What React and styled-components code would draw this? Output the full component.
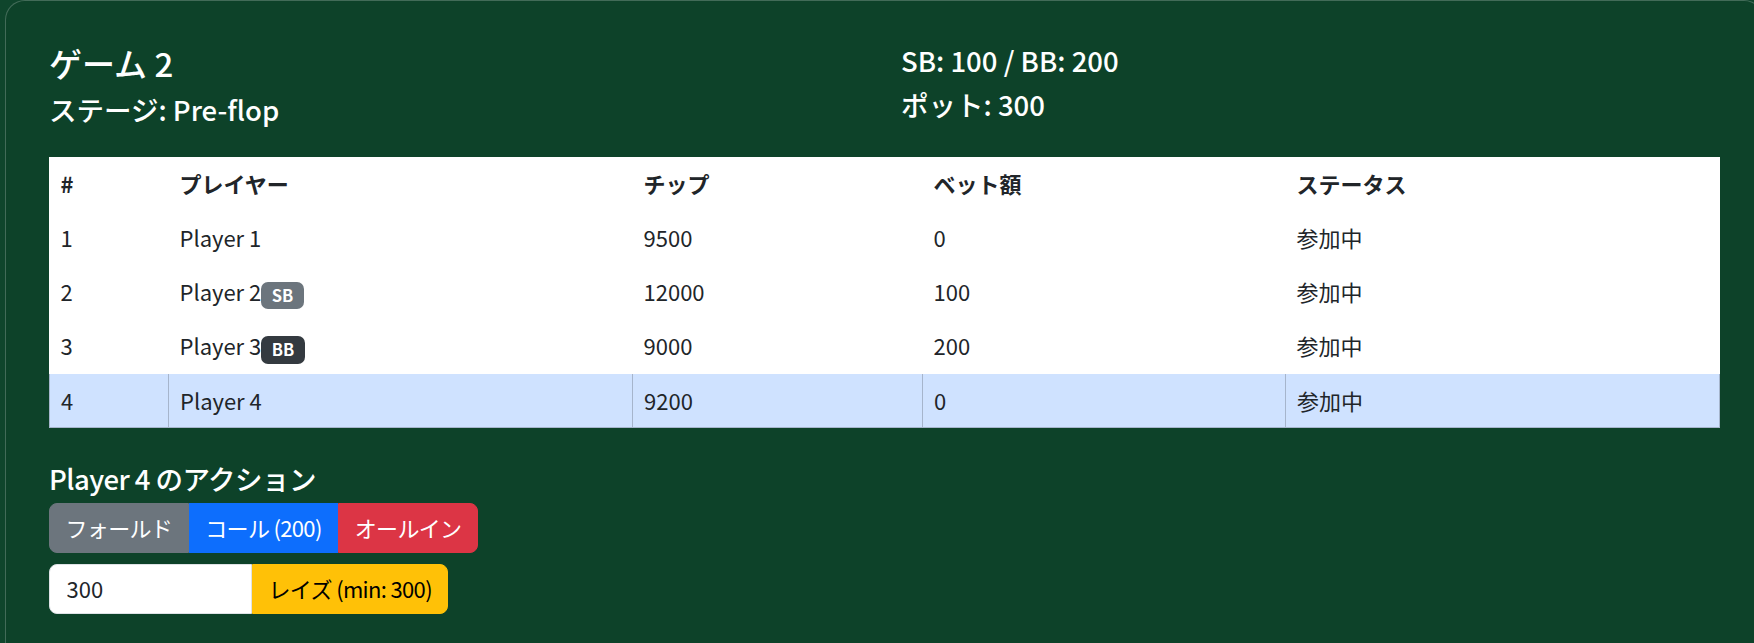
import styled, { createGlobalStyle } from "styled-components";

const GlobalStyle = createGlobalStyle`
  html, body {
    margin: 0;
    padding: 0;
    background: #0f452c;
    overflow: hidden;
  }
  body {
    font-family: "Noto Sans CJK JP", "Noto Sans", sans-serif;
    font-size: 22px;
    line-height: 1.5;
    color: #fff;
  }
  * {
    box-sizing: border-box;
  }
`;

const Page = styled.div`
  padding-left: 5px;
`;

const Card = styled.section`
  width: 1759px;
  background: #0d4229;
  border: 1px solid rgba(255, 255, 255, 0.22);
  border-radius: 20px;
  padding: 43px 43px 60px;
`;

const InfoRow = styled.div`
  display: grid;
  grid-template-columns: 1fr 1fr;
  column-gap: 33px;
  margin-bottom: 31px;
`;

const InfoCol = styled.div`
  display: flex;
  flex-direction: column;
`;

const Title = styled.h2`
  margin: 0 0 9px;
  font-size: 33px;
  font-weight: 500;
  line-height: 1.2;
`;

const SubTitle = styled.h5`
  margin: 0 0 ${(p) => (p.$last ? 0 : 11)}px;
  font-size: 27.5px;
  font-weight: 500;
  line-height: 1.2;
`;

const Table = styled.table`
  width: 1671px;
  table-layout: fixed;
  border-collapse: collapse;
  background: #fff;
  color: #212529;
  margin-bottom: 34px;
`;

const Cell = styled.td`
  padding: 10px 11px;
  line-height: 33px;
  text-align: left;
  vertical-align: middle;
  white-space: nowrap;
  font-weight: ${(p) => (p.as === "th" ? 700 : 400)};
  border-bottom: 1px solid #fff;
`;

const Row = styled.tr`
  ${(p) =>
    p.$active &&
    `
    background: #cfe2ff;
    & > td {
      border-left: 1px solid #a6b5cc;
      border-right: 1px solid #a6b5cc;
      border-bottom: 1px solid #a6b5cc;
    }
  `}
`;

const Badge = styled.span`
  display: inline-block;
  padding: 5px 10.5px 6px;
  font-size: 16.5px;
  font-weight: 700;
  line-height: 1;
  color: #fff;
  border-radius: 7px;
  position: relative;
  top: 1px;
  background: ${(p) => (p.$dark ? "#343a40" : "#6c757d")};
`;

const ActionTitle = styled.h5`
  margin: 0 0 8px;
  font-size: 27.5px;
  font-weight: 500;
  line-height: 1.2;
  letter-spacing: -0.02em;
`;

const ButtonGroup = styled.div`
  display: inline-flex;
  margin-bottom: 11px;
`;

const Button = styled.button`
  font-family: inherit;
  font-size: 22px;
  line-height: 33px;
  padding: 7.5px 15.5px;
  border: 1px solid ${(p) => p.$bg};
  background: ${(p) => p.$bg};
  color: ${(p) => p.$color || "#fff"};
  border-radius: 0;
  cursor: pointer;
  white-space: nowrap;
  letter-spacing: -0.03em;

  &:first-child {
    border-top-left-radius: 8px;
    border-bottom-left-radius: 8px;
  }
  &:last-child {
    border-top-right-radius: 8px;
    border-bottom-right-radius: 8px;
  }
`;

const InputGroup = styled.div`
  display: flex;
  width: fit-content;
`;

const AmountInput = styled.input`
  width: 203px;
  font-family: inherit;
  font-size: 22px;
  line-height: 33px;
  padding: 7.5px 16.5px;
  border: 1px solid #dee2e6;
  border-radius: 8px 0 0 8px;
  color: #212529;
  background: #fff;
  outline: none;
`;

const players = [
  { id: 1, name: "Player 1", chips: 9500, bet: 0, status: "参加中" },
  { id: 2, name: "Player 2", chips: 12000, bet: 100, status: "参加中", badge: "SB" },
  { id: 3, name: "Player 3", chips: 9000, bet: 200, status: "参加中", badge: "BB" },
  { id: 4, name: "Player 4", chips: 9200, bet: 0, status: "参加中", active: true },
];

export default function App() {
  return (
    <Page>
      <GlobalStyle />
      <Card>
        <InfoRow>
          <InfoCol>
            <Title>ゲーム 2</Title>
            <SubTitle $last>ステージ: Pre-flop</SubTitle>
          </InfoCol>
          <InfoCol>
            <SubTitle>SB: 100 / BB: 200</SubTitle>
            <SubTitle $last>ポット: 300</SubTitle>
          </InfoCol>
        </InfoRow>

        <Table>
          <colgroup>
            <col style={{ width: 119 }} />
            <col style={{ width: 464 }} />
            <col style={{ width: 290 }} />
            <col style={{ width: 363 }} />
            <col />
          </colgroup>
          <thead>
            <Row>
              <Cell as="th">#</Cell>
              <Cell as="th">プレイヤー</Cell>
              <Cell as="th">チップ</Cell>
              <Cell as="th">ベット額</Cell>
              <Cell as="th">ステータス</Cell>
            </Row>
          </thead>
          <tbody>
            {players.map((p) => (
              <Row key={p.id} $active={p.active}>
                <Cell>{p.id}</Cell>
                <Cell>
                  {p.name}
                  {p.badge && <Badge $dark={p.badge === "BB"}>{p.badge}</Badge>}
                </Cell>
                <Cell>{p.chips}</Cell>
                <Cell>{p.bet}</Cell>
                <Cell>{p.status}</Cell>
              </Row>
            ))}
          </tbody>
        </Table>

        <ActionTitle>Player 4 のアクション</ActionTitle>
        <ButtonGroup>
          <Button $bg="#6c757d">フォールド</Button>
          <Button $bg="#0d6efd">コール (200)</Button>
          <Button $bg="#dc3545">オールイン</Button>
        </ButtonGroup>
        <InputGroup>
          <AmountInput type="number" defaultValue={300} />
          <Button $bg="#ffc107" $color="#000">
            レイズ (min: 300)
          </Button>
        </InputGroup>
      </Card>
    </Page>
  );
}
